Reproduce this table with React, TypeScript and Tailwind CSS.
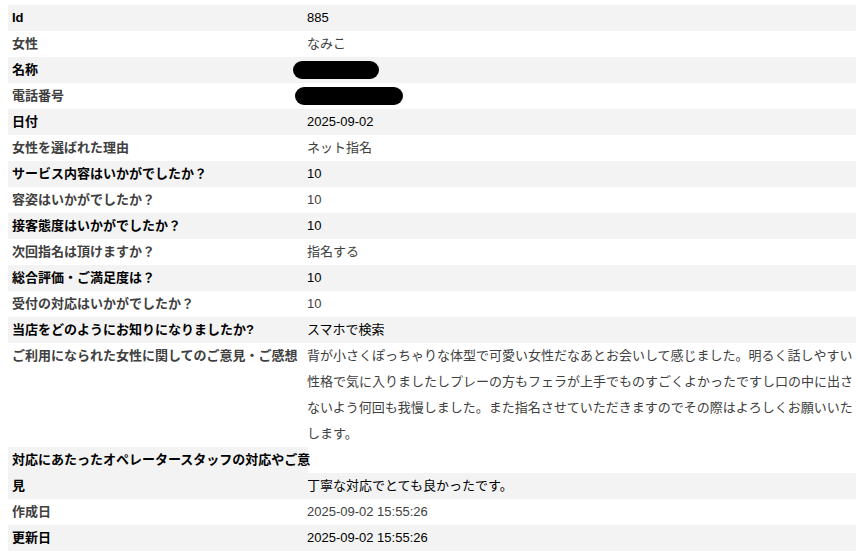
import clsx from 'clsx';

// ── Data ──────────────────────────────────────────────────────────────────────

type Row = {
  label: string;
  value?: string;
  redact?: string; // width class for the blacked-out pill
};

const ROWS: Row[] = [
  { label: 'Id', value: '885' },
  { label: '女性', value: 'なみこ' },
  { label: '名称', redact: 'w-[86px] -ml-[14px]' },
  { label: '電話番号', redact: 'w-[108px] -ml-[12px]' },
  { label: '日付', value: '2025-09-02' },
  { label: '女性を選ばれた理由', value: 'ネット指名' },
  { label: 'サービス内容はいかがでしたか？', value: '10' },
  { label: '容姿はいかがでしたか？', value: '10' },
  { label: '接客態度はいかがでしたか？', value: '10' },
  { label: '次回指名は頂けますか？', value: '指名する' },
  { label: '総合評価・ご満足度は？', value: '10' },
  { label: '受付の対応はいかがでしたか？', value: '10' },
  { label: '当店をどのようにお知りになりましたか?', value: 'スマホで検索' },
  {
    label: 'ご利用になられた女性に関してのご意見・ご感想',
    value:
      '背が小さくぽっちゃりな体型で可愛い女性だなあとお会いして感じました。明るく話しやすい性格で気に入りましたしプレーの方もフェラが上手でものすごくよかったですし口の中に出さないよう何回も我慢しました。また指名させていただきますのでその際はよろしくお願いいたします。',
  },
];

const TAIL: Row[] = [
  { label: '作成日', value: '2025-09-02 15:55:26' },
  { label: '更新日', value: '2025-09-02 15:55:26' },
];

const FONT = "font-['Liberation_Sans','Noto_Sans_CJK_JP',sans-serif]";

function rowTone(i: number) {
  return i % 2 === 0 ? 'bg-[#f3f3f3] text-black' : 'bg-white text-[#404040]';
}

function DetailRow({ row, index }: { row: Row; index: number }) {
  return (
    <div className={clsx('flex leading-[26px]', rowTone(index))}>
      <div className="w-[299px] shrink-0 pl-1 font-bold">{row.label}</div>
      <div className="flex-1 min-w-0">
        {row.redact ? (
          <div className="flex h-[26px] items-center">
            <span className={clsx('block h-[18px] rounded-full bg-black', row.redact)} />
          </div>
        ) : (
          row.value
        )}
      </div>
    </div>
  );
}

// ── Page ──────────────────────────────────────────────────────────────────────

export default function App() {
  return (
    <div className={clsx('min-h-[554px] bg-white pl-2 pr-[2px] pt-[5px] text-[13px]', FONT)}>
      {ROWS.map((row, i) => (
        <DetailRow key={row.label} row={row} index={i} />
      ))}

      {/* Label wraps onto a second line; the value sits beside the wrapped part */}
      <div className="flex leading-[26px] text-black">
        <div className="relative z-10 w-[300px] shrink-0 bg-[#f3f3f3] pl-1 font-bold">
          <div className="-mr-[4px]">対応にあたったオペレータースタッフの対応やご意見</div>
        </div>
        <div className="-ml-px flex flex-1 flex-col">
          <div className="h-[26px] bg-white" />
          <div className="h-[26px] bg-[#f3f3f3]">丁寧な対応でとても良かったです。</div>
        </div>
      </div>

      {TAIL.map((row, i) => (
        <DetailRow key={row.label} row={row} index={i + 1} />
      ))}
    </div>
  );
}
